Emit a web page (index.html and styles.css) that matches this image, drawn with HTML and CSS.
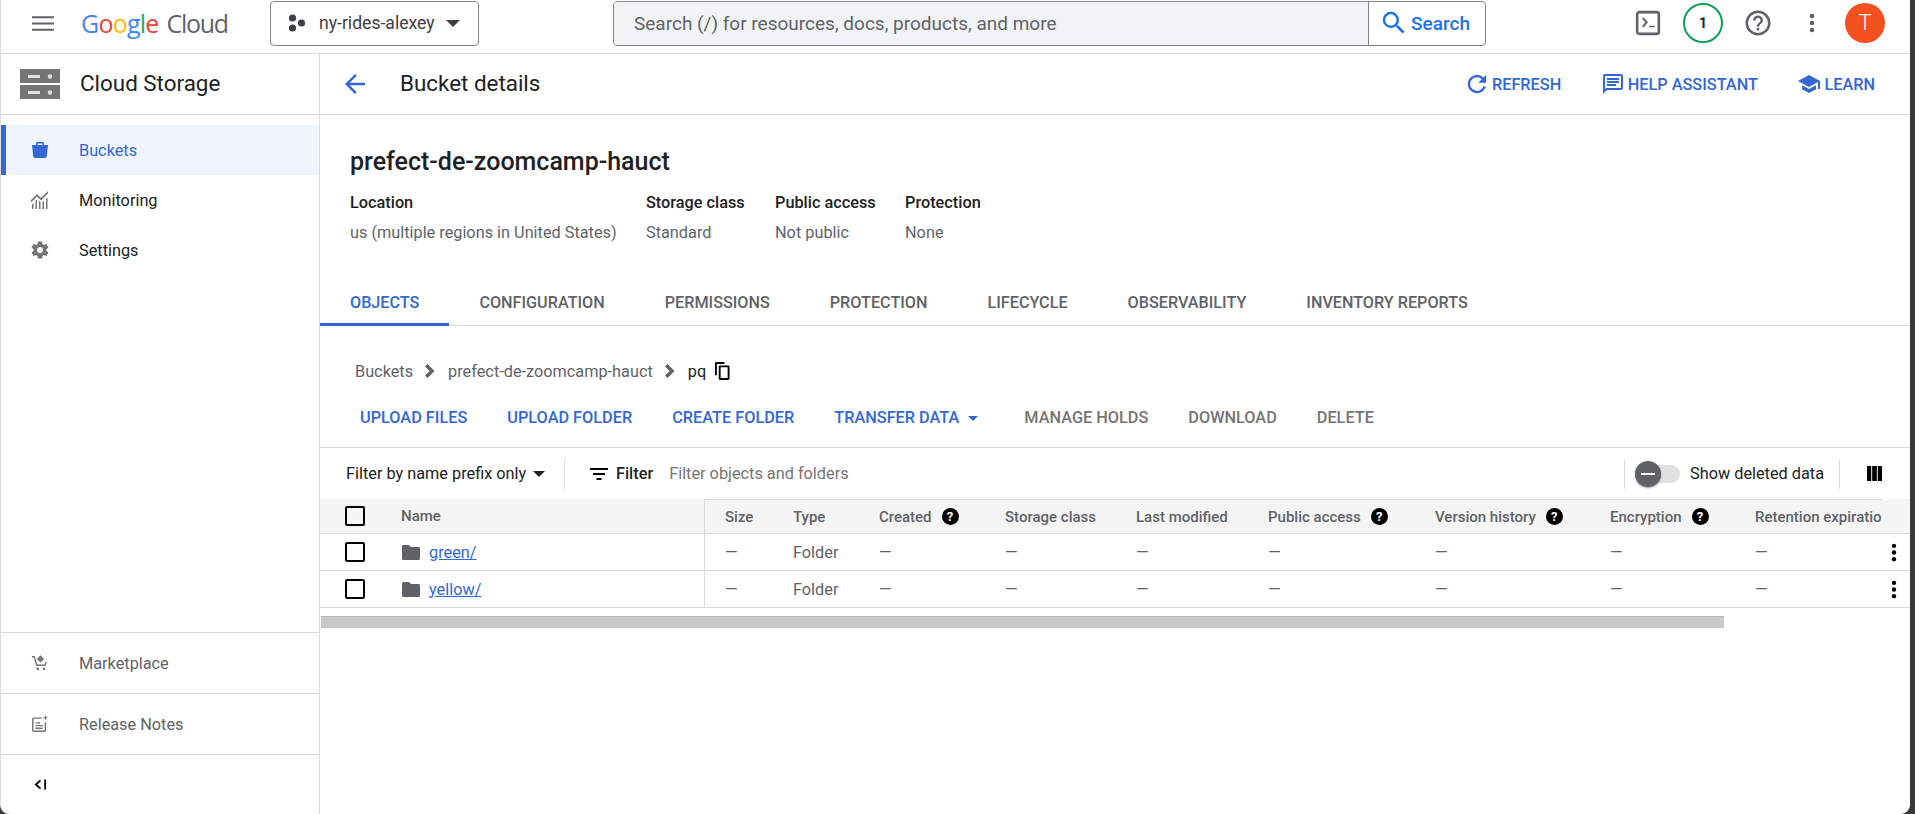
FILE: index.html
```html
<!DOCTYPE html>
<html lang="en">
<head>
    <meta charset="UTF-8">
    <title>Bucket details - Cloud Storage</title>
    <link rel="stylesheet" href="styles.css">
</head>
<body>
<div class="window">
    <header class="topbar">
        <svg class="hamburger" viewBox="0 0 24 18"><path d="M0 1h24v2.400H0zM0 7.800h24v2.400H0zM0 14.600h24v2.400H0z"/></svg>
        <div class="logo"><span class="g-blue">G</span><span class="g-red">o</span><span class="g-yellow">o</span><span class="g-blue">g</span><span class="g-green">l</span><span class="g-red">e</span><span class="logo-cloud">Cloud</span></div>
        <button class="project">
            <svg class="project-dots" viewBox="0 0 18 18"><circle cx="4.500" cy="4" r="3.600"/><circle cx="13.500" cy="9" r="3.600"/><circle cx="4.500" cy="14" r="3.600"/></svg>
            <span>ny-rides-alexey</span>
            <i class="caret caret-big"></i>
        </button>
        <div class="search">
            <div class="search-input">Search (/) for resources, docs, products, and more</div>
            <div class="search-btn">
                <svg viewBox="0 0 24 24"><path d="M15.500 14h-.79l-.28-.27A6.470 6.470 0 0 0 16 9.500 6.500 6.500 0 1 0 9.500 16c1.610 0 3.090-.59 4.230-1.570l.27.28v.79l5 4.990L20.490 19l-4.990-5zm-6 0C7.010 14 5 11.990 5 9.500S7.010 5 9.500 5 14 7.010 14 9.500 11.990 14 9.500 14z"/></svg>
                <span>Search</span>
            </div>
        </div>
        <div class="top-icons">
            <svg class="ic-terminal" viewBox="0 0 24 24"><rect x="2" y="2" width="20" height="20" rx="2" fill="none" stroke="#5f6368" stroke-width="2.400"/><path d="M6.500 8l1.300-1.200L12 12l-4.200 5.200L6.500 16l3-4zM13 15.500h5V17h-5z" fill="#5f6368" transform="translate(0 .6) scale(1 .9)"/></svg>
            <div class="notif">1</div>
            <svg class="ic-help" viewBox="0 0 24 24"><path d="M12 2a10 10 0 1 0 0 20 10 10 0 0 0 0-20zm0 18a8 8 0 1 1 0-16 8 8 0 0 1 0 16zm-1-4h2v2h-2zm1-10a4 4 0 0 0-4 4h2a2 2 0 1 1 4 0c0 2-3 1.750-3 5h2c0-2.250 3-2.500 3-5a4 4 0 0 0-4-4z"/></svg>
            <svg class="ic-more" viewBox="0 0 6 20"><circle cx="3" cy="3" r="2.300"/><circle cx="3" cy="10" r="2.300"/><circle cx="3" cy="17" r="2.300"/></svg>
            <div class="avatar">T</div>
        </div>
    </header>

    <div class="body">
        <aside class="sidebar">
            <div class="side-head">
                <svg class="storage-icon" viewBox="0 0 40 30"><path d="M0 0h40v14H0zM0 16h40v14H0z" fill="#757575"/><path d="M8 6h12v3H8zM8 22h12v3H8z" fill="#e0e0e0"/><circle cx="30" cy="7.500" r="2.200" fill="#e0e0e0"/><circle cx="30" cy="23.500" r="2.200" fill="#e0e0e0"/></svg>
                <span>Cloud Storage</span>
            </div>
            <nav class="side-nav">
                <a class="side-item active">
                    <svg viewBox="0 0 18 18"><path d="M5 4V2.500C5 1.500 5.800 1 6.500 1h5c.7 0 1.500.5 1.500 1.500V4h4l-1.200 11c-.1 1-1 2-2 2H4.200c-1 0-1.900-1-2-2L1 4zm1.500 0h5V2.500h-5z"/></svg>
                    <span>Buckets</span>
                </a>
                <a class="side-item">
                    <svg viewBox="0 0 18 18"><path d="M0 9l6-6 4 4 7-7v2.500L10 9.500l-4-4-6 6zM1 18v-4.500l1.500-1.500V18zM4.500 18V10l1.500-1.500V18zM8 18V9.500l1.500 1.500v7zM11.500 18v-7l1.500-1.500V18zM15 18V8l1.500-1.500V18z" fill="#757575"/></svg>
                    <span>Monitoring</span>
                </a>
                <a class="side-item">
                    <svg viewBox="1.500 1.500 21 21"><path fill="#757575" d="M19.400 13c.05-.3.1-.650.1-1s-.05-.7-.1-1l2.100-1.650c.2-.150.250-.4.120-.650l-2-3.450c-.12-.2-.4-.3-.6-.2l-2.500 1c-.500-.4-1.050-.7-1.700-1l-.4-2.650A.5.500 0 0 0 14 2h-4a.5.500 0 0 0-.5.400l-.4 2.650c-.6.250-1.150.6-1.700 1l-2.500-1c-.2-.1-.500 0-.6.200l-2 3.450c-.1.250-.05.500.120.650L4.500 11c-.05.300-.1.650-.1 1s.05.700.1 1l-2.100 1.650c-.2.150-.250.400-.120.650l2 3.450c.12.200.4.300.6.200l2.500-1c.5.400 1.050.700 1.700 1l.4 2.650c.03.200.25.400.5.400h4c.25 0 .47-.2.500-.4l.4-2.650c.6-.25 1.150-.6 1.700-1l2.500 1c.2.100.5 0 .6-.2l2-3.450c.1-.25.05-.5-.12-.65zM12 15.500a3.500 3.500 0 1 1 0-7 3.500 3.500 0 0 1 0 7z"/></svg>
                    <span>Settings</span>
                </a>
            </nav>
            <div class="side-bottom">
                <a class="side-foot">
                    <svg viewBox="0 0 20 20"><path fill="none" stroke="#757575" stroke-width="1.500" d="M1 3h2.500l3 9.500h9l1.500-4"/><path fill="#757575" d="M10.500 1.500l4 4-4 4-4-4z"/><circle cx="7.500" cy="16.500" r="1.600" fill="#757575"/><circle cx="14.500" cy="16.500" r="1.600" fill="#757575"/></svg>
                    <span>Marketplace</span>
                </a>
                <a class="side-foot">
                    <svg viewBox="0 0 20 20"><path fill="none" stroke="#757575" stroke-width="1.600" d="M12 3.500H3c-.6 0-1 .4-1 1V17c0 .6.4 1 1 1h12c.6 0 1-.4 1-1V8"/><path fill="#757575" d="M5 8h5v1.500H5zM5 11h8v1.500H5zM5 14h8v1.500H5zM16 0l.8 2.200L19 3l-2.200.8L16 6l-.8-2.200L13 3l2.200-.8z"/></svg>
                    <span>Release Notes</span>
                </a>
                <div class="side-collapse">
                    <svg viewBox="0 0 14 14"><path fill="none" stroke="#000" stroke-width="2" d="M7 2.500L2 7l5 4.500M12 1.500v11"/></svg>
                </div>
            </div>
        </aside>

        <main class="main">
            <div class="page-head">
                <svg class="back" viewBox="0 0 20 20"><path fill="#3367d6" d="M20 8.800H4.700l7-7L10 0 0 10l10 10 1.700-1.700-7-7.100H20z"/></svg>
                <h2>Bucket details</h2>
                <div class="page-actions">
                    <a><svg viewBox="1.500 1.500 21 21"><path d="M17.650 6.350A8 8 0 1 0 19.730 14h-2.080a6 6 0 1 1-1.410-6.240L13 11h7V4z"/></svg>REFRESH</a>
                    <a><svg viewBox="0 0 24 24"><path d="M20 2H4a2 2 0 0 0-2 2v18l4-4h14a2 2 0 0 0 2-2V4a2 2 0 0 0-2-2zm0 14H5.200L4 17.200V4h16zM6 9h12v2H6zm0 3h9v2H6zm0-6h12v2H6z"/></svg>HELP ASSISTANT</a>
                    <a><svg viewBox="0 0 24 24"><path d="M5 13.200v4L12 21l7-3.800v-4L12 17zM12 3L1 9l11 6 9-4.900V17h2V9z"/></svg>LEARN</a>
                </div>
            </div>

            <section class="bucket-info">
                <h1>prefect-de-zoomcamp-hauct</h1>
                <div class="meta">
                    <div class="meta-col meta-location"><strong>Location</strong><span>us (multiple regions in United States)</span></div>
                    <div class="meta-col meta-class"><strong>Storage class</strong><span>Standard</span></div>
                    <div class="meta-col meta-public"><strong>Public access</strong><span>Not public</span></div>
                    <div class="meta-col"><strong>Protection</strong><span>None</span></div>
                </div>
            </section>

            <div class="tabs">
                <a class="tab active">OBJECTS</a>
                <a class="tab">CONFIGURATION</a>
                <a class="tab">PERMISSIONS</a>
                <a class="tab">PROTECTION</a>
                <a class="tab">LIFECYCLE</a>
                <a class="tab">OBSERVABILITY</a>
                <a class="tab">INVENTORY REPORTS</a>
            </div>

            <div class="crumbs">
                <span>Buckets</span>
                <svg class="chev" viewBox="0 0 10 14"><path d="M2.500 0L0 2.500 4.700 7 0 11.500 2.500 14l7-7z"/></svg>
                <span>prefect-de-zoomcamp-hauct</span>
                <svg class="chev" viewBox="0 0 10 14"><path d="M2.500 0L0 2.500 4.700 7 0 11.500 2.500 14l7-7z"/></svg>
                <span class="crumb-now">pq</span>
                <svg class="copy" viewBox="0 0 16 19"><path d="M10 0H1.500C.7 0 0 .7 0 1.500V14h2V2h8zM14 3.500H5.500C4.700 3.500 4 4.200 4 5v12.500c0 .8.700 1.500 1.500 1.500H14c.8 0 1.500-.7 1.500-1.500V5c0-.8-.7-1.500-1.500-1.500zm-.5 13.500H6V5.500h7.500z"/></svg>
            </div>

            <div class="toolbar">
                <a class="tool">UPLOAD FILES</a>
                <a class="tool">UPLOAD FOLDER</a>
                <a class="tool">CREATE FOLDER</a>
                <a class="tool tool-drop">TRANSFER DATA<i class="caret caret-blue"></i></a>
                <a class="tool off">MANAGE HOLDS</a>
                <a class="tool off">DOWNLOAD</a>
                <a class="tool off">DELETE</a>
            </div>

            <div class="filter-row">
                <div class="prefix">Filter by name prefix only<i class="caret"></i></div>
                <div class="filter-label">
                    <svg viewBox="0 0 18 12"><path d="M0 0h18v2H0zM3 5h12v2H3zM6.500 10h5v2h-5z"/></svg>
                    <span>Filter</span>
                </div>
                <div class="filter-input">Filter objects and folders</div>
                <div class="deleted">
                    <div class="toggle"><div class="knob"></div></div>
                    <span>Show deleted data</span>
                </div>
                <div class="columns-btn">
                    <svg viewBox="0 0 16 16"><path d="M0 0h4.500v16H0zM5.500 0h5v16h-5zM11.500 0H16v16h-4.500z"/></svg>
                </div>
            </div>

            <div class="table">
                <div class="row head">
                    <div class="frozen">
                        <i class="check"></i>
                        <span class="name-cell">Name</span>
                    </div>
                    <div class="cell c-size">Size</div>
                    <div class="cell c-type">Type</div>
                    <div class="cell c-created">Created<i class="qmark">?</i></div>
                    <div class="cell c-class">Storage class</div>
                    <div class="cell c-mod">Last modified</div>
                    <div class="cell c-public">Public access<i class="qmark">?</i></div>
                    <div class="cell c-version">Version history<i class="qmark">?</i></div>
                    <div class="cell c-enc">Encryption<i class="qmark">?</i></div>
                    <div class="cell c-ret">Retention expiratio</div>
                </div>
                <div class="row">
                    <div class="frozen">
                        <i class="check"></i>
                        <svg class="folder" viewBox="0 0 18 15"><path d="M7 0H1.500C.7 0 0 .7 0 1.500v12C0 14.300.7 15 1.500 15h15c.8 0 1.500-.7 1.500-1.500V3.500C18 2.700 17.300 2 16.500 2H9z"/></svg>
                        <a class="link">green/</a>
                    </div>
                    <div class="cell c-size">—</div>
                    <div class="cell c-type">Folder</div>
                    <div class="cell c-created">—</div>
                    <div class="cell c-class">—</div>
                    <div class="cell c-mod">—</div>
                    <div class="cell c-public">—</div>
                    <div class="cell c-version">—</div>
                    <div class="cell c-enc">—</div>
                    <div class="cell c-ret">—</div>
                    <svg class="kebab" viewBox="0 0 6 20"><circle cx="3" cy="3" r="2.300"/><circle cx="3" cy="10" r="2.300"/><circle cx="3" cy="17" r="2.300"/></svg>
                </div>
                <div class="row">
                    <div class="frozen">
                        <i class="check"></i>
                        <svg class="folder" viewBox="0 0 18 15"><path d="M7 0H1.500C.7 0 0 .7 0 1.500v12C0 14.300.7 15 1.500 15h15c.8 0 1.500-.7 1.500-1.500V3.500C18 2.700 17.300 2 16.500 2H9z"/></svg>
                        <a class="link">yellow/</a>
                    </div>
                    <div class="cell c-size">—</div>
                    <div class="cell c-type">Folder</div>
                    <div class="cell c-created">—</div>
                    <div class="cell c-class">—</div>
                    <div class="cell c-mod">—</div>
                    <div class="cell c-public">—</div>
                    <div class="cell c-version">—</div>
                    <div class="cell c-enc">—</div>
                    <div class="cell c-ret">—</div>
                    <svg class="kebab" viewBox="0 0 6 20"><circle cx="3" cy="3" r="2.300"/><circle cx="3" cy="10" r="2.300"/><circle cx="3" cy="17" r="2.300"/></svg>
                </div>
            </div>
            <div class="scrollbar"></div>
        </main>
    </div>
</div>
</body>
</html>
```

FILE: styles.css
```css
* {
    margin: 0;
    padding: 0;
    box-sizing: border-box;
}

body {
    background: #3a3a3a;
    font-family: Roboto, "Liberation Sans", sans-serif;
    font-size: 16.3px;
    color: #202124;
    overflow: hidden;
}

a {
    cursor: pointer;
}

.window {
    width: 1910px;
    height: 814px;
    background: white;
    border-left: 1px solid #dadce0;
    border-radius: 0 0 9px 9px;
    overflow: hidden;
    display: flex;
    flex-direction: column;
}

/* top bar */
.topbar {
    height: 54px;
    flex: none;
    display: flex;
    align-items: center;
    border-bottom: 1px solid #dadce0;
    padding-bottom: 7px;
}

.hamburger {
    width: 22px;
    height: 17px;
    margin-left: 31px;
    fill: #5f6368;
}

.logo {
    margin-left: 27px;
    width: 155px;
    font-family: "Open Sans", sans-serif;
    font-size: 25px;
    letter-spacing: -0.8px;
    line-height: 30px;
    white-space: nowrap;
}

.logo-cloud {
    color: #5f6368;
    margin-left: 8px;
    letter-spacing: -1.3px;
}

.g-blue { color: #4285f4; }
.g-red { color: #ea4335; }
.g-yellow { color: #fbbc05; }
.g-green { color: #34a853; }

.project {
    width: 209px;
    height: 45px;
    margin-left: 34px;
    display: flex;
    align-items: center;
    background: white;
    border: 1px solid #80868b;
    border-radius: 4px;
    font-family: inherit;
    font-size: 17.6px;
    color: #3c4043;
    padding-left: 17px;
}

.project-dots {
    width: 18px;
    height: 18px;
    fill: #3c4043;
    margin-right: 13px;
}

.caret {
    display: inline-block;
    width: 0;
    height: 0;
    border-left: 6px solid transparent;
    border-right: 6px solid transparent;
    border-top: 6px solid #202124;
}

.caret-big {
    border-left-width: 7px;
    border-right-width: 7px;
    border-top-width: 7px;
    border-top-color: #3c4043;
    margin-left: 11px;
}

.search {
    width: 873px;
    height: 45px;
    margin-left: 134px;
    display: flex;
    border: 1px solid #80868b;
    border-radius: 4px;
    overflow: hidden;
}

.search-input {
    flex: 1;
    background: #f1f3f4;
    color: #5f6368;
    font-size: 19px;
    line-height: 43px;
    padding-left: 20px;
    border-right: 1px solid #80868b;
}

.search-btn {
    width: 116px;
    display: flex;
    align-items: center;
    padding-left: 10px;
    gap: 2px;
    color: #1a73e8;
    font-size: 19px;
    font-weight: 500;
}

.search-btn svg {
    width: 30px;
    height: 30px;
    fill: #1a73e8;
}

.top-icons {
    display: flex;
    align-items: center;
    flex: 1;
}

.ic-terminal {
    width: 26px;
    height: 26px;
    margin-left: 149px;
}

.notif {
    width: 40px;
    height: 40px;
    margin-left: 22px;
    border: 2px solid #0f9d58;
    border-radius: 50%;
    text-align: center;
    line-height: 36px;
    font-size: 14px;
    font-weight: 700;
    color: #202124;
}

.ic-help {
    width: 30px;
    height: 30px;
    margin-left: 20px;
    fill: #5f6368;
}

.ic-more {
    width: 6px;
    height: 20px;
    margin-left: 36px;
    fill: #5f6368;
}

.avatar {
    width: 40px;
    height: 40px;
    margin-left: 30px;
    border-radius: 50%;
    background: #f4511e;
    color: white;
    text-align: center;
    font-size: 22px;
    font-weight: 300;
    line-height: 40px;
}

.body {
    flex: 1;
    display: flex;
    min-height: 0;
}

/* sidebar */
.sidebar {
    width: 319px;
    flex: none;
    display: flex;
    flex-direction: column;
    border-right: 1px solid #dadce0;
}

.side-head {
    height: 61px;
    display: flex;
    align-items: center;
    gap: 20px;
    padding-left: 19px;
    border-bottom: 1px solid #dadce0;
    font-size: 22.4px;
    color: #202124;
}

.side-head span {
    margin-bottom: 2px;
}

.storage-icon {
    width: 40px;
    height: 30px;
}

.side-nav {
    padding-top: 10px;
}

.side-item {
    height: 50px;
    display: flex;
    align-items: center;
    gap: 30px;
    padding-left: 30px;
}

.side-item svg {
    width: 18px;
    height: 18px;
    fill: #757575;
}

.side-item.active {
    background: #f0f4fd;
    border-left: 5px solid #3367d6;
    padding-left: 25px;
    color: #3367d6;
}

.side-item.active svg {
    fill: #3367d6;
}

.side-bottom {
    margin-top: auto;
}

.side-foot {
    height: 61px;
    display: flex;
    align-items: center;
    gap: 30px;
    padding-left: 30px;
    border-top: 1px solid #dadce0;
    color: #5f6368;
}

.side-foot svg {
    width: 18px;
    height: 18px;
}

.side-collapse {
    height: 60px;
    display: flex;
    align-items: center;
    padding-left: 33px;
    border-top: 1px solid #dadce0;
}

.side-collapse svg {
    width: 13px;
    height: 13px;
}

/* main column */
.main {
    flex: 1;
    min-width: 0;
}

.page-head {
    height: 61px;
    display: flex;
    align-items: center;
    border-bottom: 1px solid #dadce0;
}

.back {
    width: 20px;
    height: 20px;
    margin-left: 25px;
}

.page-head h2 {
    margin: 0 0 2px 35px;
    font-size: 22.4px;
    font-weight: 400;
}

.page-actions {
    margin-left: auto;
    display: flex;
    align-items: center;
    gap: 39.5px;
    padding-right: 35px;
}

.page-actions a {
    display: flex;
    align-items: center;
    gap: 3px;
    color: #3367d6;
    font-weight: 500;
}

.page-actions svg {
    width: 24px;
    height: 24px;
    fill: #3367d6;
}

.bucket-info {
    padding: 29px 0 0 30px;
    height: 159px;
}

.bucket-info h1 {
    font-size: 25px;
    font-weight: 500;
    line-height: 36px;
}

.meta {
    display: flex;
    margin-top: 13px;
}

.meta-col strong {
    display: block;
    font-weight: 500;
    line-height: 20px;
}

.meta-col span {
    display: block;
    margin-top: 10px;
    line-height: 20px;
    color: #5f6368;
}

.meta-location { width: 296px; }
.meta-class { width: 129px; }
.meta-public { width: 130px; }

.tabs {
    height: 52px;
    display: flex;
    border-bottom: 1px solid #dadce0;
}

.tab {
    padding: 5px 30px 0;
    line-height: 48px;
    font-size: 16.2px;
    font-weight: 500;
    color: #5f6368;
    border-bottom: 2px solid transparent;
    height: 52px;
}

.tab.active {
    color: #3367d6;
    border-bottom: 3px solid #3367d6;
}

.crumbs {
    height: 76px;
    padding: 14px 0 0 35px;
    display: flex;
    align-items: center;
    color: #5f6368;
}

.chev {
    width: 10px;
    height: 14px;
    margin: 0 13px 0 12px;
    fill: #5f6368;
}

.crumb-now {
    color: #202124;
}

.copy {
    width: 15px;
    height: 18px;
    margin-left: 9px;
}

.toolbar {
    height: 46px;
    display: flex;
    align-items: center;
    padding: 0 0 15px 40px;
    border-bottom: 1px solid #dadce0;
    gap: 40px;
}

.tool {
    color: #3367d6;
    font-weight: 500;
}

.tool.off {
    color: #757575;
}

.tool-drop {
    margin-right: 6px;
}

.caret-blue {
    border-left-width: 5px;
    border-right-width: 5px;
    border-top-width: 5px;
    border-top-color: #3367d6;
    margin-left: 9px;
    vertical-align: 2px;
}

.filter-row {
    height: 51px;
    display: flex;
    align-items: center;
}

.prefix {
    width: 245px;
    padding-left: 26px;
    height: 30px;
    line-height: 30px;
    border-right: 1px solid #dadce0;
    white-space: nowrap;
}

.prefix .caret {
    margin-left: 7px;
    vertical-align: 2px;
}

.filter-label {
    display: flex;
    align-items: center;
    gap: 8px;
    margin-left: 25px;
    font-weight: 500;
}

.filter-label svg {
    width: 18px;
    height: 12px;
}

.filter-input {
    margin-left: 16px;
    color: #757575;
}

.deleted {
    margin-left: auto;
    height: 30px;
    display: flex;
    align-items: center;
    padding-left: 11px;
    width: 216px;
    border-left: 1px solid #dadce0;
    border-right: 1px solid #dadce0;
    white-space: nowrap;
}

.toggle {
    position: relative;
    width: 44px;
    height: 18px;
    border-radius: 9px;
    background: #e0e0e0;
    margin-right: 10px;
    flex: none;
}

.knob {
    position: absolute;
    left: -1px;
    top: -4px;
    width: 26px;
    height: 26px;
    border-radius: 50%;
    background: #5f6368;
    box-shadow: 0 1px 2px rgba(0,0,0,0.4);
}

.knob:after {
    content: "";
    position: absolute;
    left: 6px;
    top: 12px;
    width: 14px;
    height: 2px;
    background: white;
}

.columns-btn {
    width: 70px;
    padding-left: 27px;
    display: flex;
}

.columns-btn svg {
    width: 15px;
    height: 15px;
}

/* object table */
.row {
    position: relative;
    height: 37px;
    display: flex;
    align-items: center;
    border-bottom: 1px solid #dadce0;
    color: #5f6368;
}

.row.head {
    height: 35px;
    background: linear-gradient(#dadce0, #dadce0) 385px 0 / 1177px 1px no-repeat, #f5f5f5;
    font-size: 15px;
    font-weight: 500;
}

.frozen {
    width: 385px;
    height: 100%;
    flex: none;
    display: flex;
    align-items: center;
    padding-left: 25px;
    border-right: 1px solid #dadce0;
}

.check {
    width: 20px;
    height: 20px;
    border: 2px solid #000;
    border-radius: 2px;
    margin-right: 36px;
    flex: none;
    background: white;
}

.row.head .check {
    background: transparent;
}

.folder {
    width: 18px;
    height: 15px;
    fill: #5f6368;
    margin-left: 1px;
    margin-right: 9px;
}

.link {
    color: #3367d6;
    text-decoration: underline;
}

.cell {
    display: flex;
    align-items: center;
    padding-top: 1px;
    white-space: nowrap;
    flex: none;
}

.c-size { width: 68px; margin-left: 20px; }
.c-type { width: 86px; }
.c-created { width: 126px; }
.c-class { width: 131px; }
.c-mod { width: 132px; }
.c-public { width: 167px; }
.c-version { width: 175px; }
.c-enc { width: 145px; }
.c-ret { width: 126px; }

.qmark {
    width: 17px;
    height: 17px;
    margin-left: 10px;
    border-radius: 50%;
    background: #000;
    color: white;
    font-style: normal;
    font-size: 13px;
    font-weight: 700;
    line-height: 17px;
    text-align: center;
    flex: none;
}

.kebab {
    position: absolute;
    right: 13px;
    top: 9px;
    width: 6px;
    height: 19px;
    fill: #000;
}

.scrollbar {
    width: 1403px;
    height: 12px;
    margin: 8px 0 0 1px;
    background: #c8c8c8;
    border-top: 1px solid #bbb;
}
```
